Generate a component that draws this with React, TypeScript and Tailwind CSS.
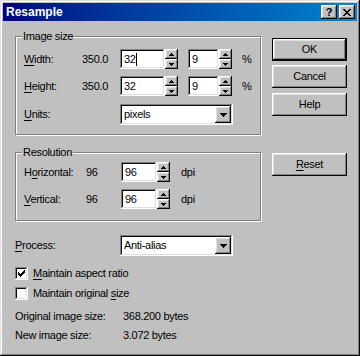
import React from 'react';

const raised =
  'bg-[#c0c0c0] shadow-[inset_-1px_-1px_#0a0a0a,inset_1px_1px_#ffffff,inset_-2px_-2px_#808080,inset_2px_2px_#dfdfdf]';
const sunken =
  'bg-white shadow-[inset_-1px_-1px_#ffffff,inset_1px_1px_#808080,inset_-2px_-2px_#dfdfdf,inset_2px_2px_#0a0a0a]';
const etched = 'border border-[#808080] shadow-[inset_1px_1px_#ffffff,1px_1px_#ffffff]';

function U({ children }: { children: React.ReactNode }) {
  return <span className="underline underline-offset-[2px]">{children}</span>;
}

function Spinner() {
  return (
    <div className="flex flex-col w-[13px] h-[20px]">
      <div className={`${raised} h-[10px] flex items-center justify-center`}>
        <svg width="5" height="3" shapeRendering="crispEdges">
          <path d="M2 0h1v1h1v1h1v1H0V2h1V1h1z" fill="#000" />
        </svg>
      </div>
      <div className={`${raised} h-[10px] flex items-center justify-center`}>
        <svg width="5" height="3" shapeRendering="crispEdges">
          <path d="M0 0h5v1h-1v1h-1v1h-1v-1h-1v-1h-1z" fill="#000" />
        </svg>
      </div>
    </div>
  );
}

function NumField({ value, width, cursor }: { value: string; width: string; cursor?: boolean }) {
  return (
    <div className="flex">
      <div className={`${sunken} ${width} h-[20px] flex items-center pl-[4px]`}>
        <span className="leading-none">{value}</span>
        {cursor && <span className="w-px h-[13px] bg-black" />}
      </div>
      <Spinner />
    </div>
  );
}

function Dropdown({ value }: { value: string }) {
  return (
    <div className={`${sunken} w-[113px] h-[21px] flex items-center justify-between pl-[4px] pr-[2px]`}>
      <span className="leading-none">{value}</span>
      <div className={`${raised} w-[16px] h-[17px] flex items-center justify-center`}>
        <svg width="7" height="4" shapeRendering="crispEdges">
          <path d="M0 0h7v1h-1v1h-1v1h-1v1h-1v-1h-1v-1h-1v-1h-1z" fill="#000" />
        </svg>
      </div>
    </div>
  );
}

function Group({ label, className, children }: { label: string; className: string; children: React.ReactNode }) {
  return (
    <div className={`relative ${etched} ${className}`}>
      <span className="absolute left-[6px] -top-[8px] px-[1px] bg-[#c0c0c0] leading-[14px]">{label}</span>
      {children}
    </div>
  );
}

function Button({ children, isDefault }: { children: React.ReactNode; isDefault?: boolean }) {
  return (
    <div className={`w-[75px] h-[23px] ${isDefault ? 'border border-black' : ''}`}>
      <div className={`${raised} w-full h-full flex items-center justify-center`}>{children}</div>
    </div>
  );
}

function Checkbox({ checked, children }: { checked: boolean; children: React.ReactNode }) {
  return (
    <div className="flex items-center h-[13px]">
      <div className={`${sunken} w-[13px] h-[13px] flex items-center justify-center`}>
        {checked && (
          <svg width="7" height="7" shapeRendering="crispEdges">
            <path
              d="M0 2h1v3H0z M1 3h1v3H1z M2 4h1v3H2z M3 3h1v3H3z M4 2h1v3H4z M5 1h1v3H5z M6 0h1v3H6z"
              fill="#000"
            />
          </svg>
        )}
      </div>
      <span className="ml-[5px]">{children}</span>
    </div>
  );
}

export default function App() {
  return (
    <div className="w-[360px] h-[356px] bg-[#c0c0c0] p-[3px] text-black text-[11px] tracking-[-0.3px] font-['Liberation_Sans',Arial,sans-serif] shadow-[inset_-1px_-1px_#0a0a0a,inset_1px_1px_#dfdfdf,inset_-2px_-2px_#808080,inset_2px_2px_#ffffff]">
      {/* Title bar */}
      <div className="h-[18px] flex items-center justify-between bg-gradient-to-r from-[#000080] to-[#1084d0] pl-[3px] pr-[2px]">
        <span className="text-white font-bold text-[12px] tracking-normal">Resample</span>
        <div className="flex gap-[2px]">
          <div className={`${raised} w-[16px] h-[14px] flex items-center justify-center`}>
            <span className="font-bold text-[11px] leading-none pt-[1px]">?</span>
          </div>
          <div className={`${raised} w-[16px] h-[14px] flex items-center justify-center`}>
            <svg width="8" height="7" shapeRendering="crispEdges">
              <path
                d="M0 0h2v1H0z M6 0h2v1H6z M1 1h2v1H1z M5 1h2v1H5z M2 2h4v1H2z M3 3h2v1H3z M2 4h4v1H2z M1 5h2v1H1z M5 5h2v1H5z M0 6h2v1H0z M6 6h2v1H6z"
                fill="#000"
              />
            </svg>
          </div>
        </div>
      </div>

      {/* Body */}
      <div className="flex pl-[12px] pt-[15px]">
        <div className="w-[247px] flex flex-col">
          <Group label="Image size" className="w-[246px] h-[99px] pl-[8px] pt-[12px]">
            <div className="flex items-center h-[20px]">
              <span className="w-[58px]"><U>W</U>idth:</span>
              <span className="w-[38px]">350.0</span>
              <NumField value="32" width="w-[45px]" cursor />
              <div className="w-[10px]" />
              <NumField value="9" width="w-[31px]" />
              <span className="ml-[10px]">%</span>
            </div>
            <div className="flex items-center h-[20px] mt-[7px]">
              <span className="w-[58px]"><U>H</U>eight:</span>
              <span className="w-[38px]">350.0</span>
              <NumField value="32" width="w-[45px]" />
              <div className="w-[10px]" />
              <NumField value="9" width="w-[31px]" />
              <span className="ml-[10px]">%</span>
            </div>
            <div className="flex items-center h-[21px] mt-[8px]">
              <span className="w-[96px]"><U>U</U>nits:</span>
              <Dropdown value="pixels" />
            </div>
          </Group>

          <Group label="Resolution" className="w-[246px] h-[69px] mt-[17px] pl-[8px] pt-[9px]">
            <div className="flex items-center h-[20px]">
              <span className="w-[62px]">H<U>o</U>rizontal:</span>
              <span className="w-[35px]">96</span>
              <NumField value="96" width="w-[36px]" />
              <span className="ml-[11px]">dpi</span>
            </div>
            <div className="flex items-center h-[20px] mt-[7px]">
              <span className="w-[62px]"><U>V</U>ertical:</span>
              <span className="w-[35px]">96</span>
              <NumField value="96" width="w-[36px]" />
              <span className="ml-[11px]">dpi</span>
            </div>
          </Group>

          <div className="flex items-center h-[21px] mt-[14px]">
            <span className="w-[105px]"><U>P</U>rocess:</span>
            <Dropdown value="Anti-alias" />
          </div>

          <div className="mt-[11px] flex flex-col gap-[7px]">
            <Checkbox checked><U>M</U>aintain aspect ratio</Checkbox>
            <Checkbox checked={false}>Maintain original <U>s</U>ize</Checkbox>
          </div>

          <div className="mt-[10px] flex flex-col gap-[6px] leading-[13px]">
            <div className="flex">
              <span className="w-[108px]">Original image size:</span>
              <span>368.200 bytes</span>
            </div>
            <div className="flex">
              <span className="w-[108px]">New image size:</span>
              <span>3.072 bytes</span>
            </div>
          </div>
        </div>

        <div className="ml-[10px] pt-[2px] flex flex-col">
          <Button isDefault>OK</Button>
          <div className="h-[4px]" />
          <Button>Cancel</Button>
          <div className="h-[5px]" />
          <Button>Help</Button>
          <div className="h-[37px]" />
          <Button><U>R</U>eset</Button>
        </div>
      </div>
    </div>
  );
}
